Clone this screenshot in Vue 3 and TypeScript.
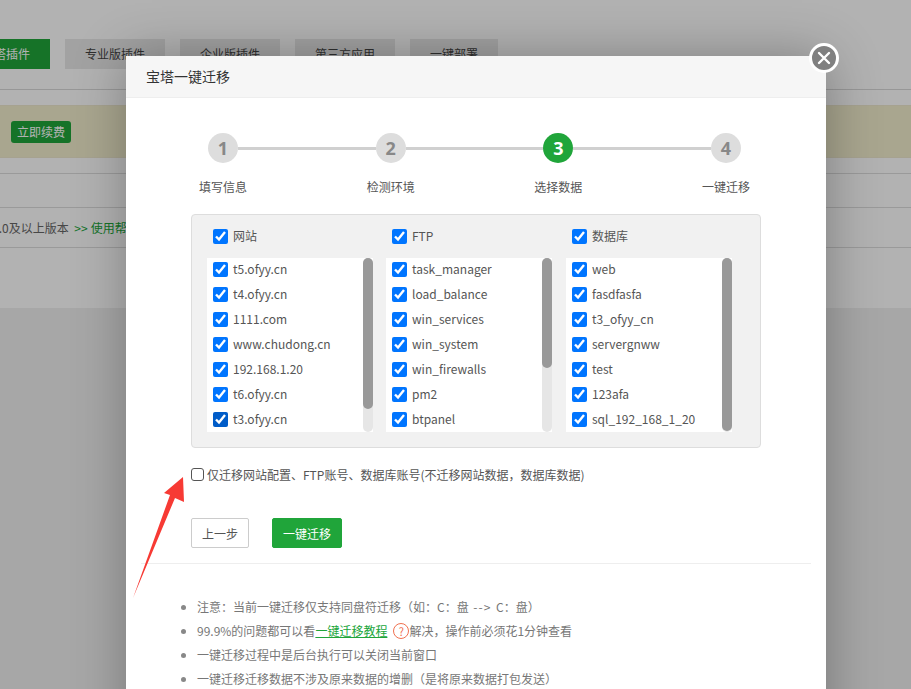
<script setup lang="ts">
interface Col { title: string; thumb: number; items: string[] }

const tabs: string[] = ['宝塔插件', '专业版插件', '企业版插件', '第三方应用', '一键部署']
const steps: string[] = ['填写信息', '检测环境', '选择数据', '一键迁移']
const active = 2
const cols: Col[] = [
  { title: '网站', thumb: 151, items: ['t5.ofyy.cn', 't4.ofyy.cn', '1111.com', 'www.chudong.cn', '192.168.1.20', 't6.ofyy.cn', 't3.ofyy.cn'] },
  { title: 'FTP', thumb: 110, items: ['task_manager', 'load_balance', 'win_services', 'win_system', 'win_firewalls', 'pm2', 'btpanel'] },
  { title: '数据库', thumb: 173, items: ['web', 'fasdfasfa', 't3_ofyy_cn', 'servergnww', 'test', '123afa', 'sql_192_168_1_20'] },
]
</script>

<template>
  <div class="root">
    <div class="page">
      <div class="tabs">
        <div v-for="(t, i) in tabs" :key="t" class="tab" :class="{ on: i === 0, short: i === 0 || i === 4 }">{{ t }}</div>
      </div>
      <div class="banner">
        <span class="colon">：</span><span class="renew">立即续费</span>
      </div>
      <div class="row r1"></div>
      <div class="row r2"></div>
      <div class="row r3"><span class="tip">7.0及以上版本 <i>&gt;&gt;</i><b>使用帮助</b></span></div>
      <div class="rest"></div>
    </div>

    <div class="shade"></div>

    <div class="modal">
      <div class="head">宝塔一键迁移</div>
      <div class="close">
        <svg width="14" height="14" viewBox="0 0 14 14"><path d="M2 2 L12 12 M12 2 L2 12" stroke="#fff" stroke-width="2.4" stroke-linecap="round" /></svg>
      </div>

      <div class="steps">
        <template v-for="(s, i) in steps" :key="s">
          <span class="dot" :class="{ on: i === active }">{{ i + 1 }}</span>
          <span v-if="i < steps.length - 1" class="bar"></span>
        </template>
      </div>
      <div class="labels">
        <span v-for="s in steps" :key="s">{{ s }}</span>
      </div>

      <div class="box">
        <div v-for="c in cols" :key="c.title" class="col">
          <label class="colhead"><input type="checkbox" checked /><span>{{ c.title }}</span></label>
          <div class="list">
            <div class="items">
              <label v-for="it in c.items" :key="it" class="item">
                <input type="checkbox" checked :class="{ pressed: it === 't3.ofyy.cn' }" /><span>{{ it }}</span>
              </label>
            </div>
            <div class="track"><div class="thumb" :style="{ height: c.thumb + 'px' }"></div></div>
          </div>
        </div>
      </div>

      <label class="only">
        <input type="checkbox" /><span>仅迁移网站配置、FTP账号、数据库账号(不迁移网站数据，数据库数据)</span>
      </label>

      <div class="btns">
        <button class="btn prev">上一步</button>
        <button class="btn go">一键迁移</button>
      </div>
      <div class="hr"></div>

      <ul class="notes">
        <li>注意：当前一键迁移仅支持同盘符迁移（如：C：盘 <span class="to">--&gt;</span> C：盘）</li>
        <li>99.9%的问题都可以看<a>一键迁移教程</a><span class="q">?</span>解决，操作前必须花1分钟查看</li>
        <li>一键迁移过程中是后台执行可以关闭当前窗口</li>
        <li>一键迁移迁移数据不涉及原来数据的增删（是将原来数据打包发送）</li>
      </ul>
    </div>

    <svg class="arrow" width="60" height="130" viewBox="0 0 60 130">
      <path d="M50 2 L31 18 L37 20 L0 123 L42 23 L51 27 Z" fill="#f73a34" />
    </svg>
  </div>
</template>

<style>
html, body { margin: 0; padding: 0; }
</style>

<style scoped>
.root {
  position: relative;
  width: 911px;
  height: 689px;
  overflow: hidden;
  font-family: "Noto Sans CJK SC", "Noto Sans", sans-serif;
  font-size: 12px;
  color: #555;
  text-spacing-trim: space-all;
}
.page { height: 689px; background: #fff; display: flex; flex-direction: column; }
.tabs {
  display: flex;
  gap: 15px;
  margin: 39px 0 0 -38px;
  padding-bottom: 20px;
  border-bottom: 1px solid #d8d8d8;
}
.tab {
  width: 100px;
  height: 30px;
  line-height: 30px;
  text-align: center;
  background: #e8e8e8;
  color: #444;
  font-size: 12px;
}
.tab.short { width: 88px; }
.tab.on { background: #20a53a; color: #fff; }
.banner {
  position: relative;
  margin-top: 15px;
  height: 53px;
  box-sizing: border-box;
  background: #f3eecd;
  border-top: 1px solid #eee9cf;
  border-bottom: 1px solid #eee9cf;
  padding: 15px 0 0 11px;
}
.colon { position: absolute; left: -6px; top: 18px; color: #555; }
.renew {
  display: block;
  width: 60px;
  height: 22px;
  line-height: 22px;
  text-align: center;
  background: #20a53a;
  color: #fff;
  border-radius: 3px;
}
.row { box-sizing: border-box; border-bottom: 1px solid #ddd; }
.r1 { height: 16px; }
.r2 { height: 34px; }
.r3 { height: 40px; line-height: 39px; overflow: visible; }
.tip { display: block; margin-left: -8px; white-space: nowrap; color: #666; }
.tip i { font-style: normal; color: #20a53a; margin: 0 3px 0 3px; }
.tip b { font-weight: 400; color: #20a53a; }
.rest { margin-top: 60px; flex: 1; background: #f0f0f0; }

.shade { position: absolute; inset: 0; background: rgba(0, 0, 0, .3); }

.modal {
  position: absolute;
  left: 126px;
  top: 56px;
  width: 700px;
  height: 700px;
  background: #fff;
  box-shadow: 1px 1px 50px rgba(0, 0, 0, .3);
}
.head {
  height: 41px;
  line-height: 41px;
  padding-left: 20px;
  background: #f6f6f6;
  border-bottom: 1px solid #eee;
  font-size: 14px;
  color: #333;
}
.close {
  position: absolute;
  right: -13px;
  top: -13px;
  width: 24px;
  height: 24px;
  border: 3px solid #fff;
  border-radius: 50%;
  background: #808080;
  display: flex;
  align-items: center;
  justify-content: center;
}
.steps {
  display: flex;
  align-items: center;
  margin: 35px 85px 0 82px;
}
.dot {
  flex: none;
  width: 30px;
  height: 30px;
  line-height: 30px;
  border-radius: 50%;
  background: #ddd;
  color: #888;
  text-align: center;
  font-family: "Noto Sans", sans-serif;
  font-size: 18px;
  font-weight: 700;
}
.dot.on { background: #20a53a; color: #fff; }
.bar { flex: 1; height: 3px; background: #d0d0d0; }
.labels {
  display: flex;
  justify-content: space-between;
  margin: 14px 76px 0 73px;
  height: 20px;
  line-height: 19px;
  color: #555;
}
.box {
  margin: 17px 0 0 65px;
  width: 570px;
  height: 234px;
  box-sizing: border-box;
  background: #f1f1f1;
  border: 1px solid #ddd;
  border-radius: 4px;
  padding: 0 0 0 15px;
  display: flex;
  gap: 13px;
}
.col { width: 166px; }
.col + .col + .col { margin-left: 1px; }
.colhead {
  display: flex;
  align-items: center;
  height: 43px;
  padding-left: 6px;
}
.list {
  display: flex;
  justify-content: space-between;
  height: 174px;
  background: #fff;
}
.items { margin-top: -1px; }
.item {
  display: flex;
  align-items: center;
  height: 25px;
  padding-left: 6px;
  white-space: nowrap;
}
input[type="checkbox"] {
  flex: none;
  width: 15px;
  height: 15px;
  margin: 0 5px 0 0;
  accent-color: #0075ff;
}
input.pressed { accent-color: #005cc8; }
.colhead span, .item span { font-size: 12px; color: #555; line-height: 15px; margin-top: -2px; }
.track {
  flex: none;
  width: 10px;
  height: 174px;
  border-radius: 5px;
  background: #e6e6e6;
}
.thumb { width: 10px; border-radius: 5px; background: #999; }

.only {
  display: flex;
  align-items: center;
  height: 18px;
  margin: 17px 0 0 65px;
  font-size: 12px;
  color: #555;
}
.only input {
  appearance: none;
  box-sizing: border-box;
  width: 13px;
  height: 13px;
  margin: 0 3px 0 0;
  background: #fff;
  border: 1px solid #555;
  border-radius: 3px;
}
.btns { display: flex; gap: 23px; margin: 35px 0 0 65px; }
.btn {
  height: 30px;
  border-radius: 2px;
  font-family: inherit;
  font-size: 12px;
  padding: 0;
}
.prev { width: 58px; background: #fff; border: 1px solid #ccc; color: #555; }
.go { width: 70px; background: #20a53a; border: 1px solid #20a53a; color: #fff; }
.hr { margin: 15px 15px 0; height: 1px; background: #eee; }
.notes {
  margin: 31px 0 0;
  padding: 0 0 0 71px;
  color: #777;
  font-size: 12px;
}
.notes li { height: 24px; line-height: 24px; }
.notes li::marker { color: #888; }
.notes a { color: #20a53a; text-decoration: underline; }
.to { letter-spacing: 1px; margin: 0 2px; }
.q {
  display: inline-block;
  box-sizing: border-box;
  width: 16px;
  height: 16px;
  line-height: 14px;
  margin: 0 0 0 6px;
  border: 1px solid #f0704f;
  border-radius: 50%;
  color: #f0704f;
  text-align: center;
  font-size: 11px;
  vertical-align: 0;
}
.arrow { position: absolute; left: 133px; top: 475px; }
</style>
